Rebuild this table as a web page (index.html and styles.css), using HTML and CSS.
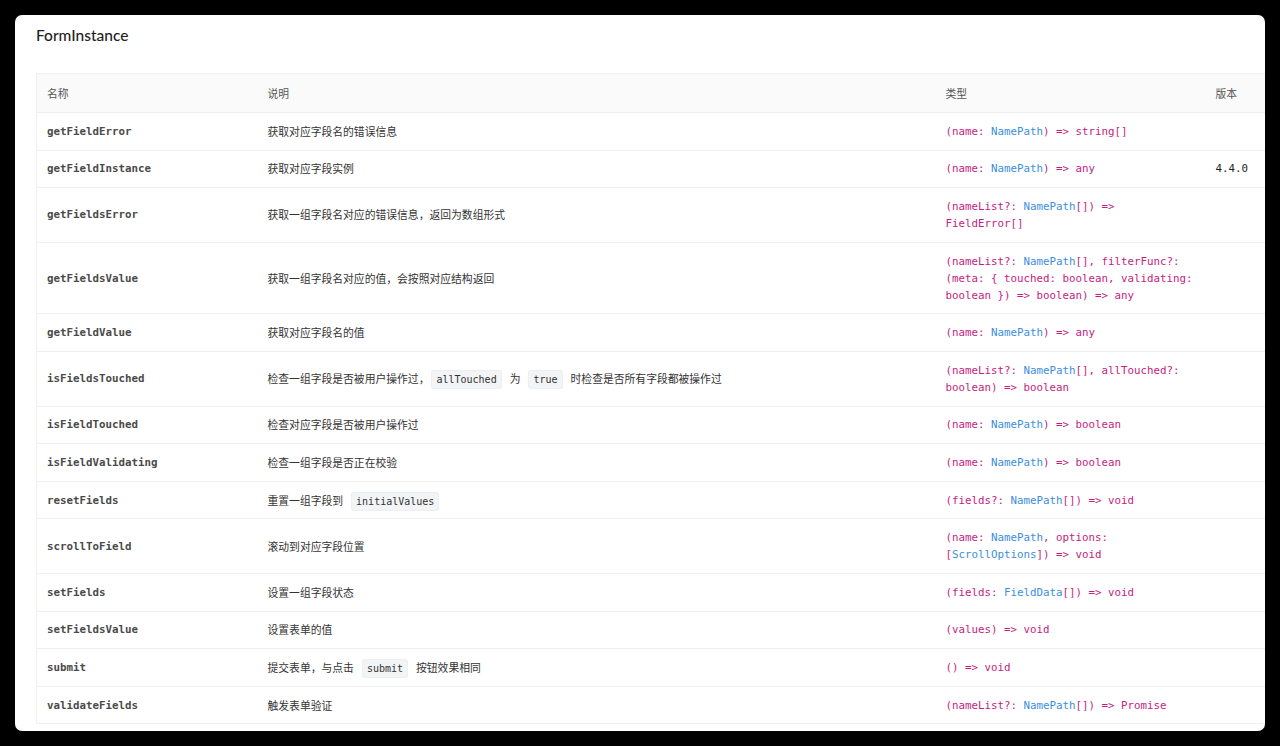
FILE: index.html
```html
<!DOCTYPE html>
<html lang="zh-CN">
<head>
<meta charset="utf-8">
<title>FormInstance</title>
<link rel="stylesheet" href="styles.css">
</head>
<body>
<div class="card">
  <h3 class="title">FormInstance</h3>
  <table class="api">
    <colgroup>
      <col class="c-name"><col class="c-desc"><col class="c-type"><col class="c-ver">
    </colgroup>
    <thead>
      <tr><th>名称</th><th>说明</th><th>类型</th><th>版本</th></tr>
    </thead>
    <tbody>
      <tr><td class="name">getFieldError</td><td>获取对应字段名的错误信息</td><td class="type">(name: <span class="ref">NamePath</span>) =&gt; string[]</td><td class="ver"></td></tr>
      <tr><td class="name">getFieldInstance</td><td>获取对应字段实例</td><td class="type">(name: <span class="ref">NamePath</span>) =&gt; any</td><td class="ver">4.4.0</td></tr>
      <tr><td class="name">getFieldsError</td><td>获取一组字段名对应的错误信息，返回为数组形式</td><td class="type">(nameList?: <span class="ref">NamePath</span>[]) =&gt; <span class="seg">FieldError[]</span></td><td class="ver"></td></tr>
      <tr><td class="name">getFieldsValue</td><td>获取一组字段名对应的值，会按照对应结构返回</td><td class="type">(nameList?: <span class="ref">NamePath</span>[], filterFunc?: <span class="seg">(meta: { touched: boolean, validating:</span> <span class="seg">boolean }) =&gt; boolean) =&gt; any</span></td><td class="ver"></td></tr>
      <tr><td class="name">getFieldValue</td><td>获取对应字段名的值</td><td class="type">(name: <span class="ref">NamePath</span>) =&gt; any</td><td class="ver"></td></tr>
      <tr><td class="name">isFieldsTouched</td><td>检查一组字段是否被用户操作过，<code class="tight">allTouched</code>为<code>true</code>时检查是否所有字段都被操作过</td><td class="type">(nameList?: <span class="ref">NamePath</span>[], allTouched?: <span class="seg">boolean) =&gt; boolean</span></td><td class="ver"></td></tr>
      <tr><td class="name">isFieldTouched</td><td>检查对应字段是否被用户操作过</td><td class="type">(name: <span class="ref">NamePath</span>) =&gt; boolean</td><td class="ver"></td></tr>
      <tr><td class="name">isFieldValidating</td><td>检查一组字段是否正在校验</td><td class="type">(name: <span class="ref">NamePath</span>) =&gt; boolean</td><td class="ver"></td></tr>
      <tr><td class="name">resetFields</td><td>重置一组字段到<code>initialValues</code></td><td class="type">(fields?: <span class="ref">NamePath</span>[]) =&gt; void</td><td class="ver"></td></tr>
      <tr><td class="name">scrollToField</td><td>滚动到对应字段位置</td><td class="type">(name: <span class="ref">NamePath</span>, options: <span class="seg">[<span class="ref">ScrollOptions</span>]) =&gt; void</span></td><td class="ver"></td></tr>
      <tr><td class="name">setFields</td><td>设置一组字段状态</td><td class="type">(fields: <span class="ref">FieldData</span>[]) =&gt; void</td><td class="ver"></td></tr>
      <tr><td class="name">setFieldsValue</td><td>设置表单的值</td><td class="type">(values) =&gt; void</td><td class="ver"></td></tr>
      <tr><td class="name">submit</td><td>提交表单，与点击<code>submit</code>按钮效果相同</td><td class="type">() =&gt; void</td><td class="ver"></td></tr>
      <tr><td class="name">validateFields</td><td>触发表单验证</td><td class="type">(nameList?: <span class="ref">NamePath</span>[]) =&gt; Promise</td><td class="ver"></td></tr>
    </tbody>
  </table>
</div>
</body>
</html>
```
FILE: styles.css
```css
html, body {
  margin: 0;
  padding: 0;
  background: #000;
}
body {
  padding: 15px 15px 0 15px;
  height: 746px;
  box-sizing: border-box;
  overflow: hidden;
}
.card {
  background: #fff;
  border-radius: 7px;
  height: 716px;
  overflow: hidden;
  padding: 10px 0 0 21px;
  box-sizing: border-box;
  font-family: "Noto Sans CJK SC", "Noto Sans", sans-serif;
}
.title {
  margin: 0 0 28px 0;
  font-family: "Lato", "Noto Sans", sans-serif;
  font-weight: 500;
  font-size: 15.5px;
  line-height: 20px;
  color: #1f1f1f;
}
.api {
  border-collapse: collapse;
  table-layout: fixed;
  width: 1300px;
  border-top: 1px solid #f0f0f0;
  border-left: 1px solid #f0f0f0;
  font-size: 10.8px;
  color: #333;
}
.c-name { width: 221px; }
.c-desc { width: 678px; }
.c-type { width: 270px; }
.c-ver { width: 131px; }
.api th {
  background: #fafafa;
  text-align: left;
  font-weight: 400;
  color: #555;
  padding: 10px 10px;
  line-height: 18px;
  border-bottom: 1px solid #f0f0f0;
}
.api td {
  padding: 9.8px 10px;
  line-height: 17px;
  border-bottom: 1px solid #f0f0f0;
  vertical-align: middle;
}
.api td.name {
  font-family: "DejaVu Sans Mono", monospace;
  font-weight: 700;
  color: #4a4a4a;
}
.api td.type {
  font-family: "DejaVu Sans Mono", monospace;
  color: #c41d7f;
}
.api td.ver {
  font-family: "DejaVu Sans Mono", monospace;
  color: #1f1f1f;
}
.ref {
  color: #3b8ede;
}
.seg {
  white-space: nowrap;
}
code {
  font-family: "DejaVu Sans Mono", monospace;
  font-size: 10px;
  line-height: 0;
  padding: 3px 4px;
  margin: 0 8px;
  background: #f2f4f5;
  border: 1px solid #eceeef;
  border-radius: 3px;
  color: #333;
}
code.tight {
  margin-left: 2px;
}
```
